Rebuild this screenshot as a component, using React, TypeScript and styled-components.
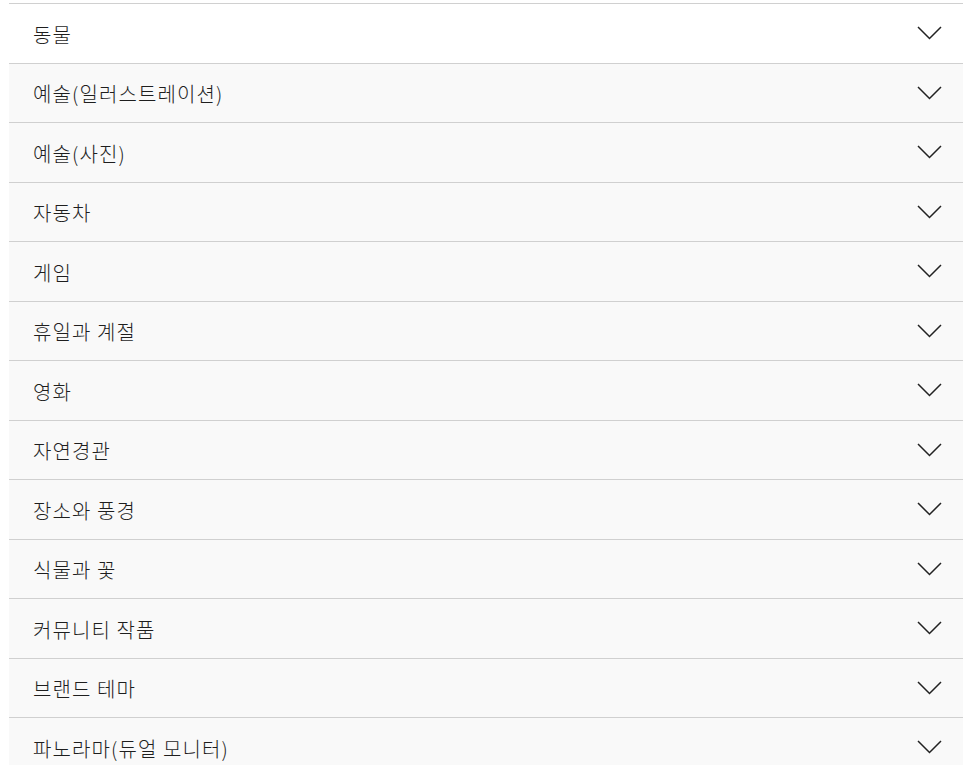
import { createGlobalStyle, styled } from "styled-components";

const GlobalStyle = createGlobalStyle`
    html, body {
        margin: 0;
        padding: 0;
        background: #ffffff;
    }
    body {
        font-family: "Noto Sans CJK KR", "Noto Sans", "Liberation Sans", sans-serif;
        color: #222222;
    }
`;

const List = styled.ul`
    list-style: none;
    margin: 0;
    padding: 3px 0 0 9px;
`;

const Row = styled.li<{ $first?: boolean }>`
    display: flex;
    align-items: center;
    justify-content: space-between;
    height: 58.5px;
    padding: 0 21px 0 24px;
    border-top: 1px solid #d0d0d0;
    background: ${(p) => (p.$first ? "#ffffff" : "#f9f9f9")};
    cursor: pointer;
`;

const Label = styled.span`
    font-size: 20px;
    font-weight: 300;
    letter-spacing: 1.1px;
    line-height: 24px;
    padding-top: 3px;
    color: #1e1e1e;
`;

const Chevron = styled.svg`
    width: 25px;
    height: 14px;
    flex-shrink: 0;
`;

const categories = [
    "동물",
    "예술(일러스트레이션)",
    "예술(사진)",
    "자동차",
    "게임",
    "휴일과 계절",
    "영화",
    "자연경관",
    "장소와 풍경",
    "식물과 꽃",
    "커뮤니티 작품",
    "브랜드 테마",
    "파노라마(듀얼 모니터)",
];

export default function App() {
    return <>
        <GlobalStyle />
        <List>
            {categories.map((name, i) => (
                <Row key={name} $first={i === 0}>
                    <Label>{name}</Label>
                    <Chevron viewBox="0 0 25 14">
                        <polyline points="1,1 12.5,12.5 24,1" fill="none" stroke="#222" strokeWidth="1.5" />
                    </Chevron>
                </Row>
            ))}
        </List>
    </>
}
